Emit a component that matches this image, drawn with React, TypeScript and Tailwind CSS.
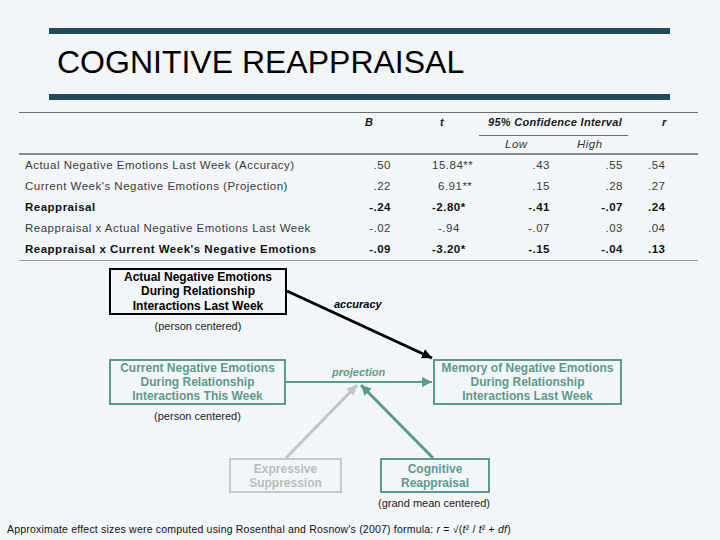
import React from 'react';

type Row = {
  label: string;
  b: string;
  t: string;
  tPad: string;
  low: string;
  high: string;
  r: string;
  bold?: boolean;
};

const rows: Row[] = [
  { label: 'Actual Negative Emotions Last Week (Accuracy)', b: '.50', t: '15.84**', tPad: 'pl-[41px]', low: '.43', high: '.55', r: '.54' },
  { label: "Current Week's Negative Emotions (Projection)", b: '.22', t: '6.91**', tPad: 'pl-[47px]', low: '.15', high: '.28', r: '.27' },
  { label: 'Reappraisal', b: '-.24', t: '-2.80*', tPad: 'pl-[41px]', low: '-.41', high: '-.07', r: '.24', bold: true },
  { label: 'Reappraisal x Actual Negative Emotions Last Week', b: '-.02', t: '-.94', tPad: 'pl-[47px]', low: '-.07', high: '.03', r: '.04' },
  { label: "Reappraisal x Current Week's Negative Emotions", b: '-.09', t: '-3.20*', tPad: 'pl-[41px]', low: '-.15', high: '-.04', r: '.13', bold: true },
];

const GRID = 'grid grid-cols-[341px_31px_87px_72px_73px_75px]';

/**
 * Regression table
 */
const ResultsTable: React.FC = () => (
  <div className="ml-[19px] mt-[12px] w-[679px] text-[11.5px] tracking-[0.5px]">
    <div className="h-px bg-[#6e6e6e]" />
    <div className={`${GRID} h-[19px] items-center whitespace-nowrap text-[11px] font-bold italic tracking-[0.3px] text-[#1a1a1a]`}>
      <div />
      <div className="pl-[5px]">B</div>
      <div className="pl-[49px]">t</div>
      <div className="col-span-2 pl-[10px]">95% Confidence Interval</div>
      <div className="pl-[39px]">r</div>
    </div>
    <div className="ml-[460px] mt-[3px] h-px w-[149px] bg-[#6e6e6e]" />
    <div className={`${GRID} h-[17px] items-center italic text-[#333]`}>
      <div />
      <div />
      <div />
      <div className="pl-[27px]">Low</div>
      <div className="pl-[27px]">High</div>
      <div />
    </div>
    <div className="h-[2px] bg-[#8a8a8a]" />
    {rows.map((row) => (
      <div
        key={row.label}
        className={`${GRID} h-[21px] items-center whitespace-nowrap ${
          row.bold ? 'font-bold text-[#111]' : 'text-[#3a3a3a]'
        }`}
      >
        <div className="pl-[6px]">{row.label}</div>
        <div className="text-right">{row.b}</div>
        <div className={row.tPad}>{row.t}</div>
        <div className="text-right">{row.low}</div>
        <div className="text-right">{row.high}</div>
        <div className="pl-[25px]">{row.r}</div>
      </div>
    ))}
    <div className="h-px bg-[#9a9a9a]" />
  </div>
);

/**
 * Path diagram: nodes sit on a free canvas, arrows drawn in svg
 */
const PathDiagram: React.FC = () => (
  <div className="relative h-[257px] w-full">
    <svg className="absolute inset-0" width="720" height="257">
      <defs>
        <marker id="ahBlack" markerUnits="userSpaceOnUse" markerWidth="12" markerHeight="12" refX="10" refY="5" orient="auto">
          <path d="M0,0 L10,5 L0,10 z" fill="#000" />
        </marker>
        <marker id="ahTeal" markerUnits="userSpaceOnUse" markerWidth="12" markerHeight="12" refX="10" refY="5" orient="auto">
          <path d="M0,0 L10,5 L0,10 z" fill="#5c9a8b" />
        </marker>
        <marker id="ahGray" markerUnits="userSpaceOnUse" markerWidth="12" markerHeight="12" refX="10" refY="5" orient="auto">
          <path d="M0,0 L10,5 L0,10 z" fill="#c4c4c4" />
        </marker>
      </defs>
      <line x1="287" y1="30" x2="432" y2="97" stroke="#000" strokeWidth="3" markerEnd="url(#ahBlack)" />
      <line x1="286" y1="121" x2="432" y2="121" stroke="#5c9a8b" strokeWidth="2" markerEnd="url(#ahTeal)" />
      <line x1="286" y1="197" x2="357" y2="124" stroke="#c4c4c4" strokeWidth="3" markerEnd="url(#ahGray)" />
      <line x1="433" y1="197" x2="361" y2="124" stroke="#5c9a8b" strokeWidth="3" markerEnd="url(#ahTeal)" />
    </svg>

    <div className="absolute left-[109px] top-[7px] flex h-[47px] w-[178px] flex-col items-center justify-center border-2 border-black text-center text-[12px] font-bold leading-[14.5px] text-black">
      <span>Actual Negative Emotions</span>
      <span>During Relationship</span>
      <span>Interactions Last Week</span>
    </div>
    <div className="absolute left-[109px] top-[59px] w-[178px] text-center text-[11px] leading-[13px] text-[#222]">
      (person centered)
    </div>

    <div className="absolute left-[334px] top-[37px] text-[11px] font-bold italic leading-[13px] text-black">
      accuracy
    </div>

    <div className="absolute left-[109px] top-[98px] flex h-[46px] w-[177px] flex-col items-center justify-center border-2 border-[#5c9a8b] text-center text-[12px] font-bold leading-[14px] text-[#5c9a8b]">
      <span>Current Negative Emotions</span>
      <span>During Relationship</span>
      <span>Interactions This Week</span>
    </div>
    <div className="absolute left-[109px] top-[149px] w-[177px] text-center text-[11px] leading-[13px] text-[#222]">
      (person centered)
    </div>

    <div className="absolute left-[332px] top-[105px] text-[11px] font-bold italic leading-[13px] text-[#5c9a8b]">
      projection
    </div>

    <div className="absolute left-[433px] top-[98px] flex h-[46px] w-[189px] flex-col items-center justify-center border-2 border-[#5c9a8b] text-center text-[12px] font-bold leading-[14px] text-[#5c9a8b]">
      <span>Memory of Negative Emotions</span>
      <span>During Relationship</span>
      <span>Interactions Last Week</span>
    </div>

    <div className="absolute left-[229px] top-[197px] flex h-[35px] w-[113px] flex-col items-center justify-center border-2 border-[#c8c8c8] text-center text-[12px] font-bold leading-[14px] text-[#bcbcbc]">
      <span>Expressive</span>
      <span>Suppression</span>
    </div>

    <div className="absolute left-[380px] top-[197px] flex h-[35px] w-[110px] flex-col items-center justify-center border-2 border-[#5c9a8b] text-center text-[12px] font-bold leading-[14px] text-[#5c9a8b]">
      <span>Cognitive</span>
      <span>Reappraisal</span>
    </div>
    <div className="absolute left-[378px] top-[236px] w-[112px] text-center text-[11px] leading-[13px] text-[#222]">
      (grand mean centered)
    </div>
  </div>
);

export default function App() {
  return (
    <div className="h-[540px] w-[720px] overflow-hidden bg-[#f3f6f9] font-['Liberation_Sans',Arial,sans-serif]">
      <div className="pl-[49px] pr-[50px] pt-[28px]">
        <div className="h-[6px] bg-[#1f4a5b]" />
        <h1 className="mt-[12px] pl-[8px] text-[32px] leading-[32px] text-black">COGNITIVE REAPPRAISAL</h1>
        <div className="mt-[16px] h-[6px] bg-[#1f4a5b]" />
      </div>

      <ResultsTable />
      <PathDiagram />

      <p className="ml-[7px] mt-[5px] whitespace-nowrap text-[10.5px] leading-[13px] tracking-[0.2px] text-[#111]">
        Approximate effect sizes were computed using Rosenthal and Rosnow's (2007) formula:{' '}
        <i>r</i> = √(<i>t</i>² / <i>t</i>² + <i>df</i>)
      </p>
    </div>
  );
}
